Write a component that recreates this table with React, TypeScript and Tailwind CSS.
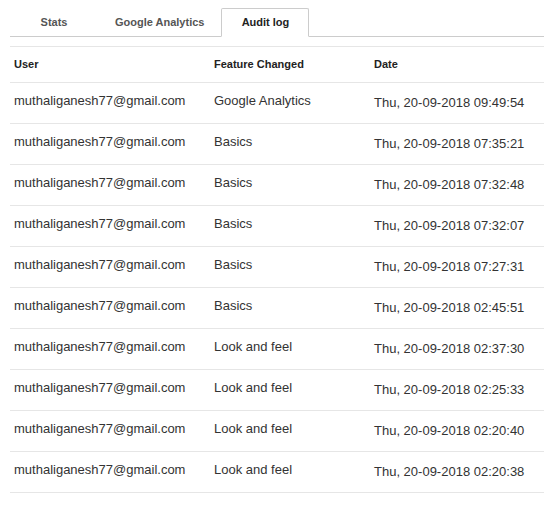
const rows = [
  ["Google Analytics", "Thu, 20-09-2018 09:49:54"],
  ["Basics", "Thu, 20-09-2018 07:35:21"],
  ["Basics", "Thu, 20-09-2018 07:32:48"],
  ["Basics", "Thu, 20-09-2018 07:32:07"],
  ["Basics", "Thu, 20-09-2018 07:27:31"],
  ["Basics", "Thu, 20-09-2018 02:45:51"],
  ["Look and feel", "Thu, 20-09-2018 02:37:30"],
  ["Look and feel", "Thu, 20-09-2018 02:25:33"],
  ["Look and feel", "Thu, 20-09-2018 02:20:40"],
  ["Look and feel", "Thu, 20-09-2018 02:20:38"],
];

const tabs = ["Stats", "Google Analytics", "Audit log"];

export default function App() {
  return (
    <div className="min-h-[510px] bg-white pl-[10px] pt-[8px] font-['Liberation_Sans',Arial,sans-serif] text-[#333]">
      {/* tabs */}
      <div className="flex border-b border-[#ccc]">
        {tabs.map((t) => {
          const active = t === "Audit log";
          return (
            <div
              key={t}
              className={
                active
                  ? "-mb-px flex h-[29px] min-w-[88px] items-center justify-center rounded-t-[2px] border border-[#ccc] border-b-white bg-white px-[17px] text-[11px] font-bold text-[#222]"
                  : "flex h-[28px] min-w-[88px] items-center justify-center px-[17px] text-[11px] font-bold text-[#555]"
              }
            >
              {t}
            </div>
          );
        })}
      </div>

      {/* table */}
      <div className="mt-[9px] border-t border-[#e6e6e6]">
        <div className="grid h-[36px] grid-cols-[200px_160px_1fr] border-b border-[#e6e6e6] pt-[9px] text-[11px] font-bold leading-[16px] text-[#222]">
          <div className="pl-[4px]">User</div>
          <div className="pl-[4px]">Feature Changed</div>
          <div className="pl-[4px]">Date</div>
        </div>
        {rows.map(([feature, date], i) => (
          <div
            key={i}
            className="grid h-[41px] grid-cols-[200px_160px_1fr] border-b border-[#e6e6e6] text-[13px] leading-[18px]"
          >
            <div className="pl-[4px] pt-[9px]">muthaliganesh77@gmail.com</div>
            <div className="pl-[4px] pt-[9px]">{feature}</div>
            <div className="pl-[4px] pt-[11px]">{date}</div>
          </div>
        ))}
      </div>
    </div>
  );
}
